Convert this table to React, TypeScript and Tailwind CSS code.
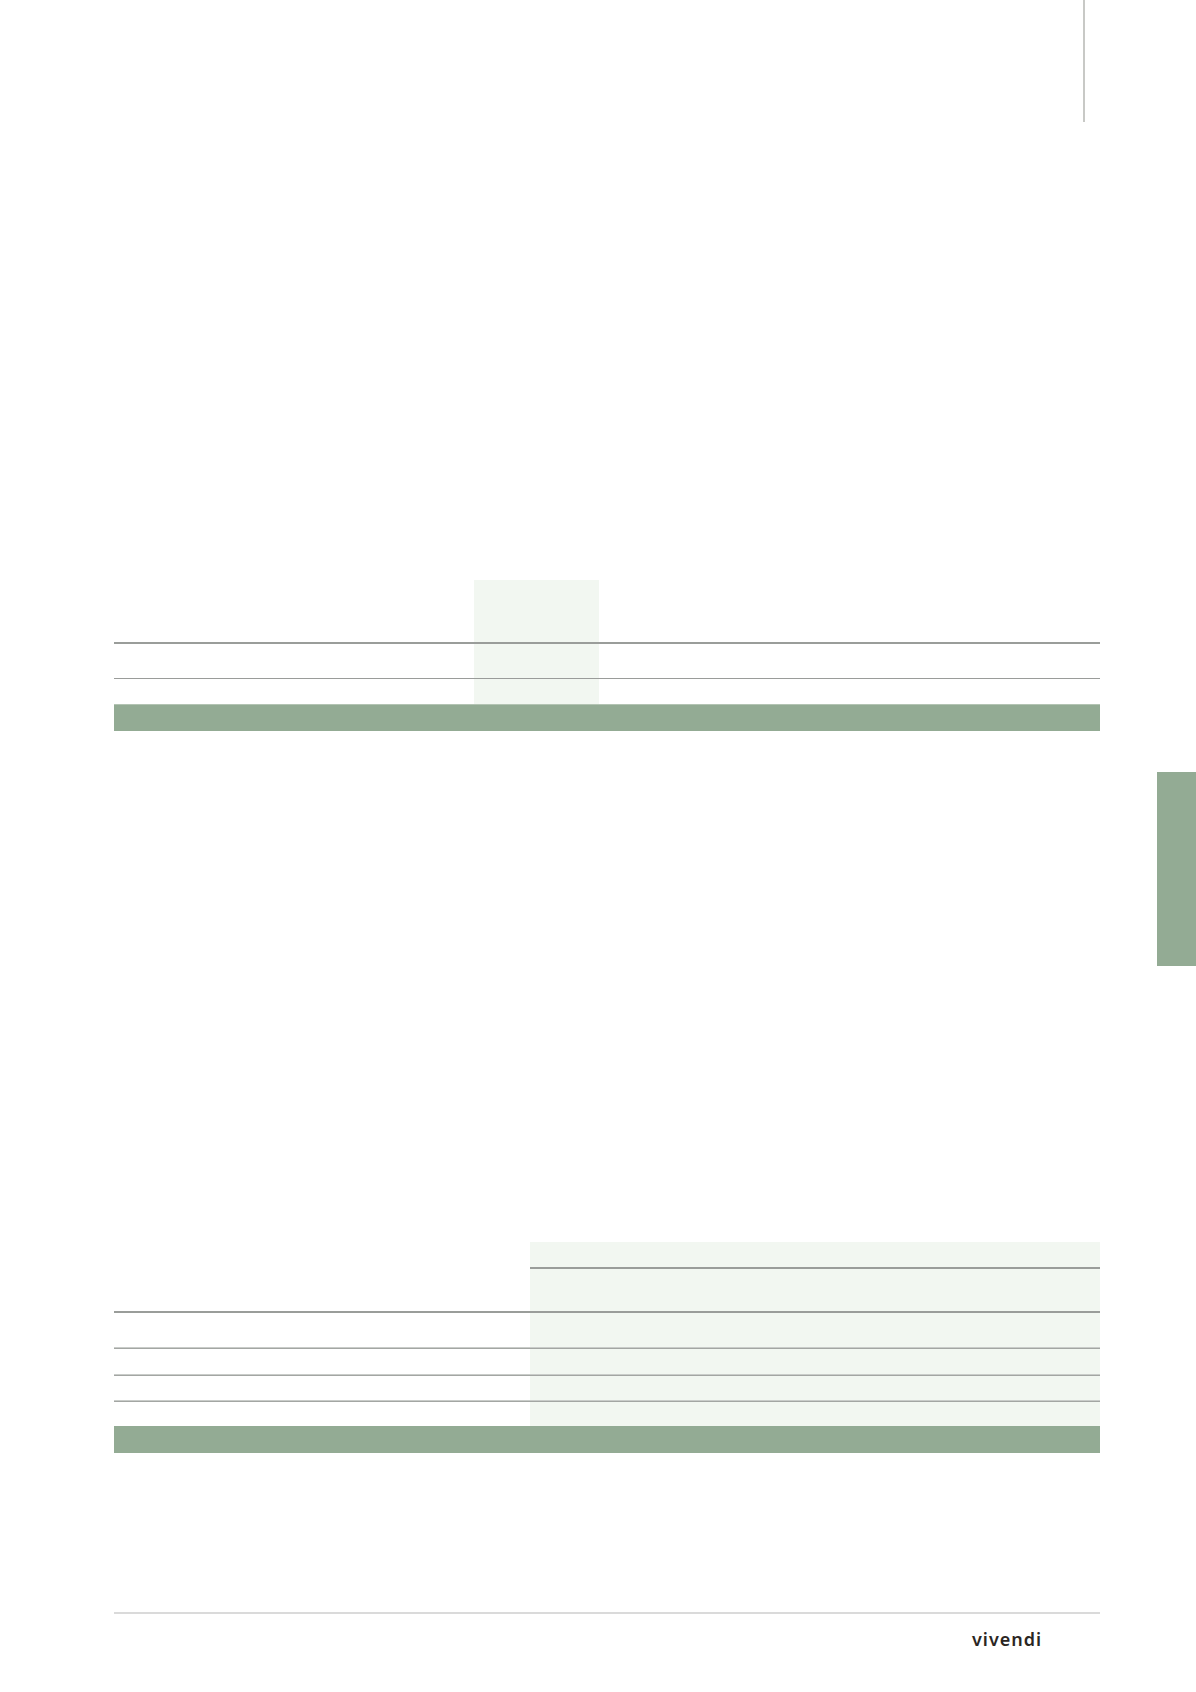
import React from "react";

const GREEN = "bg-[#93ab94]";

function Table1() {
  const cols = "grid grid-cols-[360px_125px_125px_125px_125px_126px]";
  const Row = ({ h }: { h: string }) => (
    <div className={cols}>
      {[0, 1, 2, 3, 4, 5].map((i) => (
        <div key={i} className={`${h} ${i === 1 ? "bg-[#f2f7f1]" : ""}`} />
      ))}
    </div>
  );
  return (
    <div className="mx-[114px] mt-[458px] w-[986px] flex flex-col">
      <Row h="h-[62px]" />
      <div className="h-[2px] bg-[#9a9d9a]" />
      <Row h="h-[34px]" />
      <div className="h-[1px] bg-[#9a9c9a]" />
      <Row h="h-[25px]" />
      <div className={`h-[27px] ${GREEN} border-t border-[#b3c4b3]`} />
    </div>
  );
}

function Table2() {
  const cols = "grid grid-cols-[416px_114px_114px_114px_114px_114px]";
  const Row = ({ h }: { h: string }) => (
    <div className={cols}>
      {[0, 1, 2, 3, 4, 5].map((i) => (
        <div key={i} className={`${h} ${i >= 1 ? "bg-[#f2f7f1]" : ""}`} />
      ))}
    </div>
  );
  const Line = () => (
    <div className="flex flex-col">
      <div className="h-[1px] bg-[#c9ccc9]" />
      <div className="h-[1px] bg-[#a3a6a3]" />
    </div>
  );
  return (
    <div className="mx-[114px] mt-[276px] w-[986px] flex flex-col">
      <Row h="h-[25px]" />
      <div className={cols}>
        <div className="h-[2px]" />
        {[1, 2, 3, 4, 5].map((i) => (
          <div key={i} className="h-[2px] bg-[#9a9d9a]" />
        ))}
      </div>
      <Row h="h-[42px]" />
      <div className="h-[2px] bg-[#9a9d9a]" />
      <Row h="h-[34px]" />
      <Line />
      <Row h="h-[25px]" />
      <Line />
      <Row h="h-[24px]" />
      <Line />
      <Row h="h-[24px]" />
      <div className={`h-[27px] ${GREEN}`} />
    </div>
  );
}

export default function App() {
  return (
    <div className="w-[1196px] h-[1692px] bg-white overflow-hidden flex flex-col">
      <div className="h-[122px] flex">
        <div className="ml-[1083px] w-[2px] h-full bg-[#c8c9c6]" />
      </div>
      <Table1 />
      <div className="mt-[41px] flex justify-end">
        <div className={`w-[39px] h-[194px] ${GREEN}`} />
      </div>
      <Table2 />
      <div className="mx-[114px] mt-[159px] w-[986px] h-[2px] bg-[#dadada]" />
      <div className="mt-[16px] flex">
        <span
          className="ml-[972px] text-[18px] leading-[18px] font-semibold tracking-[1px] text-[#2b2623]"
          style={{ fontFamily: '"Noto Sans", "Liberation Sans", sans-serif' }}
        >
          vivendi
        </span>
      </div>
    </div>
  );
}
